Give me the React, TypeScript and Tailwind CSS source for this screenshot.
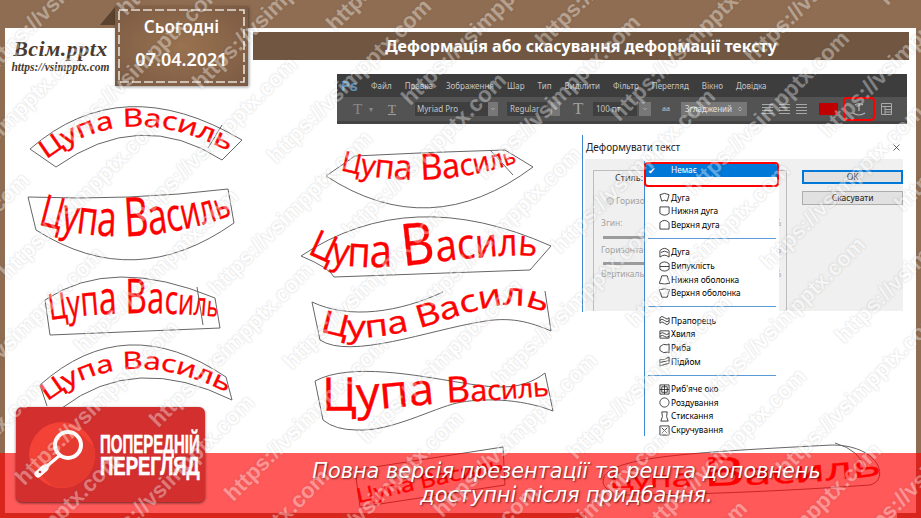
import React from "react";
import { X, ChevronDown, ChevronsUpDown } from "lucide-react";

const menuItems = ["Файл", "Правка", "Зображення", "Шар", "Тип", "Виділити", "Фільтр", "Перегляд", "Вікно", "Довідка"];

const LETTERS = "Цупа Василь".split("");

interface Warp {
  outline: string;
  baseline: string;
  sizes: number[];
  length: number;
}

const warps: Warp[] = [
  {
    outline: "M30 149 Q122 69 242 140 L222 160 Q140 107 56 167 Z",
    baseline: "M46 160 Q125 97 230 152",
    sizes: [25, 25, 25, 25, 25, 25, 25, 25, 25, 25, 25],
    length: 195,
  },
  {
    outline: "M28 197 Q130 201 228 189 L234 223 Q135 293 36 230 Z",
    baseline: "M38 224 Q130 252 230 216",
    sizes: [44, 46, 48, 50, 50, 54, 50, 46, 44, 40, 36],
    length: 198,
  },
  {
    outline: "M45 300 Q112 255 215 298 L220 328 L50 335 Z",
    baseline: "M50 320 Q130 308 218 317",
    sizes: [36, 38, 42, 46, 46, 48, 44, 40, 36, 32, 28],
    length: 168,
  },
  {
    outline: "M40 385 Q125 309 226 377 L232 400 Q135 352 62 408 M40 385 L47 406",
    baseline: "M47 402 Q125 340 230 394",
    sizes: [24, 24, 24, 24, 24, 24, 24, 24, 24, 24, 24],
    length: 192,
  },
  {
    outline: "M326 176 L355 156 Q430 152 505 150 L533 167 Q430 244 326 176 Z",
    baseline: "M340 170 Q430 193 518 162",
    sizes: [28, 30, 33, 35, 35, 36, 34, 30, 28, 26, 22],
    length: 180,
  },
  {
    outline: "M301 256 Q410 183 551 246 L530 270 L334 277 Q330 268 301 256 Z",
    baseline: "M308 252 Q335 275 430 263 T538 258",
    sizes: [38, 38, 42, 46, 46, 58, 44, 42, 40, 38, 36],
    length: 232,
  },
  {
    outline: "M312 302 C350 320 400 312 443 292 M312 302 L320 340 C350 360 430 330 480 322 C510 316 530 322 551 331 L545 291",
    baseline: "M320 330 C350 345 400 335 440 322 S510 296 548 314",
    sizes: [31, 31, 31, 31, 31, 31, 31, 31, 31, 31, 31],
    length: 232,
  },
  {
    outline: "M315 381 C350 362 420 376 457 382 S520 392 545 373 L553 411 C520 398 480 398 457 403 S390 432 357 430 Q335 430 323 420 Z",
    baseline: "M322 410 C370 412 420 404 460 402 S520 398 548 396",
    sizes: [46, 46, 46, 44, 44, 36, 30, 28, 26, 26, 26],
    length: 228,
  },
  {
    outline: "M355 470 L503 447 L505 485 L360 507 Z",
    baseline: "M358 503 L505 470",
    sizes: [20, 20, 20, 20, 20, 20, 20, 20, 20, 20, 20],
    length: 150,
  },
  {
    outline: "M605 475 C620 456 700 452 832 445 C880 445 890 480 870 485 C800 490 700 495 620 495 C605 490 600 485 605 475 Z",
    baseline: "M610 488 C700 486 800 486 888 474",
    sizes: [20, 20, 22, 24, 24, 40, 30, 30, 30, 30, 30],
    length: 272,
  },
];

const smallIcons: Record<string, string> = {
  arc: "M1 3 Q6 0 11 3 L9 10 Q6 8 3 10 Z",
  arcLower: "M1 1 L11 1 L11 8 Q6 12 1 8 Z",
  arcUpper: "M1 4 Q6 -1 11 4 L11 11 L1 11 Z",
  arch: "M1 4 Q6 -1 11 4 L11 11 Q6 7 1 11 Z M2 6 Q6 3 10 6",
  bulge: "M1 3 Q6 -1 11 3 L11 9 Q6 13 1 9 Z M1 6 L11 6",
  shellLower: "M3 2 L9 2 Q10 7 12 10 Q6 12 0 10 Q2 7 3 2 Z",
  shellUpper: "M0 2 Q6 0 12 2 Q10 5 9 10 L3 10 Q2 5 0 2 Z",
  flag: "M1 3 Q3 0 6 3 T11 3 L11 9 Q9 12 6 9 T1 9 Z M1 6 Q3 3 6 6 T11 6",
  wave: "M1 2 L11 2 L11 10 L1 10 Z M1 5 Q4 3 6 5 T11 5 M1 8 Q4 6 6 8 T11 8",
  fish: "M1 4 Q5 0 9 2 L11 1 L11 11 L9 10 Q5 12 1 8 Z",
  rise: "M1 4 Q6 5 11 1 L11 8 Q6 9 1 11 Z M1 7 L11 5",
  fisheye: "M1 1 L11 1 L11 11 L1 11 Z M3 3 L9 3 L9 9 L3 9 Z M1 6 L11 6 M6 1 L6 11",
  inflate: "M6 1 A5 5 0 1 1 5.9 1 Z",
  squeeze: "M3 1 L9 1 Q7 6 10 11 L2 11 Q5 6 3 1 Z",
  twist: "M1 1 L11 1 L11 11 L1 11 Z M3 9 L9 3 M3 3 L6 6 M6 6 L9 9",
};

const styleGroups: [string, string][][] = [
  [["arc", "Дуга"], ["arcLower", "Нижня дуга"], ["arcUpper", "Верхня дуга"]],
  [["arch", "Дуга"], ["bulge", "Випуклість"], ["shellLower", "Нижня оболонка"], ["shellUpper", "Верхня оболонка"]],
  [["flag", "Прапорець"], ["wave", "Хвиля"], ["fish", "Риба"], ["rise", "Підйом"]],
  [["fisheye", "Риб'яче око"], ["inflate", "Роздування"], ["squeeze", "Стискання"], ["twist", "Скручування"]],
];

function WarpedSamples() {
  return (
    <svg className="absolute left-0 top-0" width={921} height={518} viewBox="0 0 921 518" fill="none">
      {warps.map((w, i) => (
        <g key={i}>
          <path d={w.outline} stroke="#666" strokeWidth={1} />
          <path id={`warp-${i}`} d={w.baseline} />
          <text fill="#ff0000" stroke="#ff0000" strokeWidth={0.35} fontFamily="'Open Sans', sans-serif">
            <textPath href={`#warp-${i}`} textLength={w.length} lengthAdjust="spacingAndGlyphs">
              {LETTERS.map((ch, j) => (
                <tspan key={j} fontSize={w.sizes[j]}>{ch}</tspan>
              ))}
            </textPath>
          </text>
        </g>
      ))}
      <path d="M222 125 L208 148 M490 150 L513 175 M197 287 L203 325 M835 443 Q860 450 866 470" stroke="#666" strokeWidth={1} />
    </svg>
  );
}

function DropArrow({ width }: { width: string }) {
  return (
    <div className={`${width} h-[14px] bg-[#777] flex items-center justify-center text-[#ddd]`}>
      <ChevronDown size={6} />
    </div>
  );
}

function PhotoshopBar() {
  return (
    <div className="ml-[332px] w-[570px] h-[50px] mt-[14px] bg-[#444] font-['Noto_Sans',sans-serif] text-[#c4c4c4]">
      <div className="h-[23px] bg-[#3d3d3d] flex items-center text-[8px]">
        <span className="w-[34px] pl-[4px] text-[15px] font-bold leading-none text-[#5b8db8]">Ps</span>
        <div className="flex gap-[13px]">
          {menuItems.map((item) => (
            <span key={item}>{item}</span>
          ))}
        </div>
      </div>
      <div className="h-[24px] bg-[#535353] flex items-center text-[8px] pl-[16px]">
        <span className="w-[16px] font-['Liberation_Serif',serif] text-[15px] text-[#8a8a8a]">T</span>
        <span className="w-[19px] text-[#8a8a8a]">▾</span>
        <span className="w-[27px] font-['Liberation_Serif',serif] text-[13px] underline text-[#a0a0a0]">T</span>
        <div className="w-[73px] h-[14px] bg-[#3f3f3f] pl-[2px] leading-[14px]">Myriad Pro</div>
        <DropArrow width="w-[10px] mr-[9px]" />
        <div className="w-[40px] h-[14px] mr-[4px] bg-[#3f3f3f] pl-[3px] leading-[14px]">Regular</div>
        <DropArrow width="w-[9px] mr-[13px]" />
        <span className="w-[20px] font-['Liberation_Serif',serif] text-[17px] text-[#a0a0a0]">T</span>
        <div className="w-[44px] h-[14px] mr-[2px] bg-[#3f3f3f] pl-[3px] leading-[14px]">100 пт</div>
        <DropArrow width="w-[12px] mr-[11px]" />
        <span className="w-[19px] font-['Liberation_Serif',serif] text-[9px]">aa</span>
        <div className="w-[66px] h-[14px] bg-[#777] px-[4px] flex items-center justify-between text-[#e2e2e2]">
          Згладжений <ChevronsUpDown size={6} />
        </div>
        <div className="ml-[15px] w-[45px] flex justify-between text-[#a8a8a8]">
          {[0, 1, 2].map((n) => (
            <div key={n} className="w-[11px] flex flex-col gap-[2px]">
              <div className="h-px bg-current" />
              <div className="h-px bg-current" />
              <div className="h-px bg-current" />
              <div className="h-px bg-current" />
            </div>
          ))}
        </div>
        <div className="ml-[12px] w-[19px] h-[12px] bg-[#c00000]" />
        <div className="ml-[5px] w-[32px] h-[24px] border-2 border-[#f00] rounded-[4px] flex items-center justify-center">
          <svg width={14} height={16} viewBox="0 0 14 16" fill="none" stroke="#bbb" strokeWidth={1.2}>
            <path d="M3 4 Q7 1 11 4 M7 2.5 L7 10 M1 12 Q7 16 13 12" />
          </svg>
        </div>
        <svg className="ml-[6px]" width={11} height={12} viewBox="0 0 11 12" fill="none" stroke="#aaa">
          <path d="M.5 .5 H10.5 V11.5 H.5 Z M.5 3.5 H10.5 M4 3.5 V11.5 M4 6.5 H10.5 M4 9 H10.5" />
        </svg>
      </div>
    </div>
  );
}

function StyleMenu() {
  return (
    <div className="absolute left-[61px] top-[26px] w-[135px] h-[275px] bg-white border-l border-[#3d8ad0] text-[8.3px] text-black">
      <div className="h-[25px] border-2 border-[#f00] rounded-[4px] mt-px -ml-px overflow-hidden">
        <div className="h-[13px] bg-[#0078d7] text-white flex items-center leading-none">
          <span className="w-[25px] pl-[2px] text-[9px]">✔</span>
          <span>Немає</span>
        </div>
      </div>
      <div className="pt-[4px]">
        {styleGroups.map((group, g) => (
          <div key={g} className="pb-[6px] pt-[7px] mx-[3px] border-b border-[#5a9bd5] last:border-b-0 first:pt-0">
            {group.map(([icon, label]) => (
              <div key={icon} className="h-[13.6px] flex items-center pl-[11px] gap-px">
                <svg width={11} height={11} viewBox="0 0 12 12" fill="none" stroke="#222" strokeWidth={0.9}>
                  <path d={smallIcons[icon]} />
                </svg>
                <span className="leading-none">{label}</span>
              </div>
            ))}
          </div>
        ))}
      </div>
    </div>
  );
}

function WarpDialog() {
  return (
    <div className="relative ml-[577px] mt-[11px] w-[323px] h-[177px] border-l border-[#3d8ad0] bg-white font-['Noto_Sans',sans-serif]">
      <div className="h-[24px] flex items-center justify-between pl-[3px] pr-[3px] text-[10px] text-[#222]">
        <span>Деформувати текст</span>
        <X size={11} strokeWidth={1.5} />
      </div>
      <div className="mx-[2px] h-[152px] bg-[#f0f0f0] flex pt-[11px] pl-[8px]">
        <div className="w-[195px] h-[141px] border border-[#bdbdbd] border-b-0 text-[8.5px] text-[#a3a3a3]">
          <div className="pl-[21px] h-[16px] text-[#333] text-[9px]">Стиль:</div>
          <div className="mt-[8px] pl-[12px] flex items-center gap-[2px]">
            <span className="w-[8px] h-[8px] rounded-full border border-[#bbb] bg-[#ddd]" />
            Горизо
          </div>
          <div className="mt-[9px] pl-[7px] flex justify-between pr-[5px]">
            <span>Згин:</span>
            <span>%</span>
          </div>
          <div className="mt-[6px] ml-[9px] w-[42px] h-[3px] bg-[#9c9c9c]" />
          <div className="mt-[5px] pl-[7px] flex justify-between pr-[5px]">
            <span>Горизонта</span>
            <span>%</span>
          </div>
          <div className="mt-[6px] ml-[9px] w-[42px] h-[3px] bg-[#9c9c9c]" />
          <div className="mt-[3px] pl-[7px] flex justify-between pr-[5px]">
            <span>Вертикаль</span>
            <span>%</span>
          </div>
        </div>
        <div className="ml-[15px] w-[101px] flex flex-col gap-[7px] text-[8.5px] text-[#222]">
          <div className="h-[14px] border-2 border-[#0078d7] bg-[#e1e1e1] flex items-center justify-center">OK</div>
          <div className="h-[14px] border border-[#adadad] bg-[#e1e1e1] flex items-center justify-center">Скасувати</div>
        </div>
      </div>
      <StyleMenu />
    </div>
  );
}

function PreviewBadge() {
  return (
    <div className="absolute left-[16px] top-[407px] w-[189px] h-[95px] rounded-[6px] bg-[#d32f2f] shadow-[0_1px_3px_rgba(0,0,0,.6)] flex items-center pl-[12px] font-['Liberation_Sans',sans-serif] text-white">
      <svg width={68} height={68} viewBox="0 0 68 68" className="shrink-0">
        <circle cx={34} cy={34} r={33} fill="#f44336" />
        <path d="M14 55 L30 30 L52 12 L66 26 A33 33 0 0 1 24 65 Z" fill="#e53a30" />
        <circle cx={40} cy={24} r={13} fill="none" stroke="#fff" strokeWidth={4} />
        <path d="M31 35 L18 46" stroke="#fff" strokeWidth={3} />
        <path d="M17 47 L10 53" stroke="#fff" strokeWidth={7} strokeLinecap="round" />
        <circle cx={12} cy={51} r={1.3} fill="#d32f2f" />
      </svg>
      <div className="ml-[4px] font-bold text-[25px] leading-[22px] [-webkit-text-stroke:0.6px_white] whitespace-nowrap">
        <div className="origin-left scale-x-[.6]">ПОПЕРЕДНІЙ</div>
        <div className="origin-left scale-x-[.74]">ПЕРЕГЛЯД</div>
      </div>
    </div>
  );
}

function Watermark() {
  const marks: { x: number; y: number }[] = [];
  for (let a = -8; a < 6; a++) {
    for (let b = -9; b < 6; b++) {
      const x = 579 + a * 134 + b * 75;
      const y = 463 - a * 58 + b * 74;
      if (x > -170 && x < 921 && y > 0 && y < 700) marks.push({ x, y });
    }
  }
  return (
    <div className="absolute inset-0 overflow-hidden pointer-events-none">
      {marks.map((m, i) => (
        <span
          key={i}
          className="absolute -rotate-45 origin-bottom-left whitespace-nowrap font-['Liberation_Sans',sans-serif] font-bold text-[22px] leading-none text-white opacity-35 [text-shadow:0_0_2px_rgba(70,70,70,.8)]"
          style={{ left: m.x, top: m.y - 22 }}
        >
          https://vsimpptx.com
        </span>
      ))}
    </div>
  );
}

export default function App() {
  return (
    <div className="relative w-[921px] h-[518px] overflow-hidden bg-[#8f6d52] flex flex-col">
      <div className="h-[28px] shrink-0" />
      <div className="flex-1 mx-[5px] bg-white pt-[4px]">
        <div className="ml-[248px] mr-[7px] h-[28px] bg-[#715742] flex items-center justify-center font-['Noto_Sans',sans-serif] font-bold text-[16px] text-white">
          Деформація або скасування деформації тексту
        </div>
        <PhotoshopBar />
        <WarpDialog />
      </div>
      <div className="h-[5px] shrink-0 flex">
        <div className="w-[585px]" />
        <div className="w-[312px] bg-white" />
      </div>

      <WarpedSamples />

      <div className="absolute left-[100px] top-[7px] w-0 h-0 border-l-[15px] border-l-transparent border-b-[18px] border-b-[#5c4330]" />
      <div className="absolute left-[115px] top-[6px] w-[133px] h-[80px] pt-[10px] flex flex-col items-center gap-[10px] bg-[radial-gradient(ellipse_at_center,#99724f,#7a5a44)] shadow-[1px_1px_3px_rgba(0,0,0,.4)] font-['Noto_Sans',sans-serif] font-semibold text-white">
        <svg className="absolute inset-0" width={133} height={80} fill="none">
          <rect x={4} y={4} width={125} height={72} stroke="#e8e0d8" strokeWidth={1.6} strokeDasharray="9 3" />
        </svg>
        <span className="text-[17px] leading-[22px]">Сьогодні</span>
        <span className="text-[18px] leading-[22px]">07.04.2021</span>
      </div>
      <div className="absolute left-[9px] top-[37px] w-[103px] text-center text-[#4a3a2e] font-['Liberation_Serif',serif] italic font-bold">
        <div className="text-[22px] leading-[24px] tracking-[.5px]">Всім.pptx</div>
        <div className="text-[11.5px] leading-[13px]">https://vsimpptx.com</div>
      </div>

      <div className="absolute left-0 right-0 top-[453px] h-[65px] bg-[#ff0000]/65 flex flex-col items-center pl-[212px] pt-[6px] font-['DejaVu_Sans',sans-serif] italic text-[20.8px] leading-[24px] text-white [text-shadow:1px_1px_2px_rgba(60,0,0,.7)]">
        <span>Повна версія презентації та решта доповнень</span>
        <span>доступні після придбання.</span>
      </div>
      <PreviewBadge />
      <Watermark />
    </div>
  );
}
